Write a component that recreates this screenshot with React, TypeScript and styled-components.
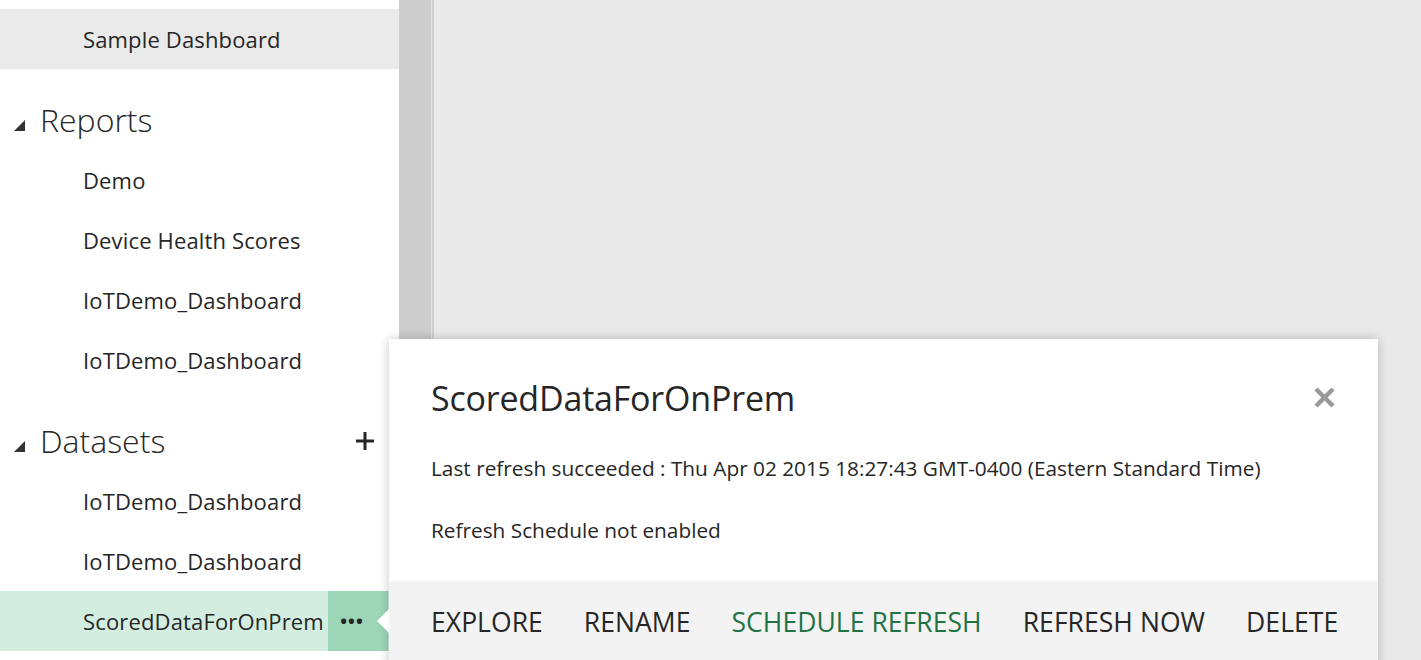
import React from 'react'
import styled, {createGlobalStyle} from 'styled-components'

const GlobalStyle = createGlobalStyle`
  html, body {
    margin: 0;
    padding: 0;
    height: 660px;
    overflow: hidden;
  }
  body {
    font-family: "Open Sans", "Noto Sans", sans-serif;
    color: #262626;
  }
`

const Page = styled.div`
  position: relative;
  display: flex;
  height: 660px;
  background: #e9e9e9;
`

const Sidebar = styled.nav`
  width: 399px;
  flex-shrink: 0;
  background: #ffffff;
  padding-top: 9px;
  box-sizing: border-box;
`

const Gutter = styled.div`
  width: 32px;
  flex-shrink: 0;
  background: #cdcdcd;
  border-right: 1px solid #e4e4e4;
  box-shadow: 1px 0 0 #cfcfcf, 2px 0 0 #cfcfcf;
`

const Item = styled.div<{$active?: boolean; $selected?: boolean}>`
  position: relative;
  display: flex;
  align-items: center;
  height: 60px;
  padding-left: 83px;
  font-size: 22px;
  letter-spacing: 0.15px;
  background: ${(p) => (p.$selected ? '#d3eee0' : p.$active ? '#eaeaea' : 'transparent')};
`

const Section = styled.div`
  display: flex;
  align-items: center;
  height: 81px;
  padding: 20px 24px 0 14px;
  box-sizing: border-box;
  font-size: 32px;
  font-weight: 300;
`

const SectionTitle = styled.span`
  flex: 1;
  margin-left: 15px;
`

const Triangle = styled.svg`
  width: 11px;
  height: 11px;
  margin-top: 12px;
  fill: #333;
`

const MoreButton = styled.div`
  position: absolute;
  top: 0;
  right: 11px;
  width: 60px;
  height: 60px;
  background: #9dd5b7;
  display: flex;
  align-items: center;
  justify-content: center;
  padding-right: 12px;
  box-sizing: border-box;
  font-size: 18px;
  font-weight: 700;
  letter-spacing: 1px;
  color: #262626;
`

const Popup = styled.div`
  position: absolute;
  left: 389px;
  top: 339px;
  width: 989px;
  height: 340px;
  background: #ffffff;
  box-shadow: 0 0 10px rgba(0, 0, 0, 0.22);
`

const Pointer = styled.div`
  position: absolute;
  left: -12px;
  top: 270px;
  width: 0;
  height: 0;
  border-top: 12px solid transparent;
  border-bottom: 12px solid transparent;
  border-right: 12px solid #ffffff;
`

const PopupHeader = styled.div`
  display: flex;
  align-items: center;
  justify-content: space-between;
  padding: 39px 42px 0 42px;
  height: 40px;
`

const PopupTitle = styled.h2`
  margin: 0;
  font-size: 34px;
  font-weight: 400;
  letter-spacing: -0.2px;
  color: #262626;
`

const CloseIcon = styled.svg`
  width: 23px;
  height: 23px;
  stroke: #999999;
  stroke-width: 4.5;
  margin-top: -2px;
`

const InfoLine = styled.p`
  margin: 0;
  padding-left: 42px;
  font-size: 20.8px;
  line-height: 62px;
`

const InfoBlock = styled.div`
  padding-top: 19px;
`

const Footer = styled.div`
  position: absolute;
  left: 0;
  right: 0;
  top: 242px;
  height: 98px;
  background: #f3f3f3;
  display: flex;
  align-items: flex-start;
  padding: 23px 0 0 42px;
  box-sizing: border-box;
  gap: 41px;
`

const Action = styled.span<{$accent?: boolean}>`
  font-size: 26.5px;
  font-weight: 400;
  letter-spacing: 0.05px;
  color: ${(p) => (p.$accent ? '#217346' : '#262626')};
`

const reports = ['Demo', 'Device Health Scores', 'IoTDemo_Dashboard', 'IoTDemo_Dashboard']
const datasets = ['IoTDemo_Dashboard', 'IoTDemo_Dashboard']

const SectionHeader = ({title, add}: {title: string; add?: boolean}) => (
  <Section>
    <Triangle viewBox="0 0 10 10">
      <polygon points="10,0 10,10 0,10" />
    </Triangle>
    <SectionTitle>{title}</SectionTitle>
    {add && (
      <svg width="20" height="20" viewBox="0 0 20 20">
        <path d="M10 1 V19 M1 10 H19" stroke="#262626" strokeWidth="3" />
      </svg>
    )}
  </Section>
)

export default function App() {
  return (
    <>
      <GlobalStyle />
      <Page>
        <Sidebar>
          <Item $active>Sample Dashboard</Item>
          <SectionHeader title="Reports" />
          {reports.map((r, i) => (
            <Item key={i}>{r}</Item>
          ))}
          <SectionHeader title="Datasets" add />
          {datasets.map((d, i) => (
            <Item key={i}>{d}</Item>
          ))}
          <Item $selected>
            ScoredDataForOnPrem
            <MoreButton>•••</MoreButton>
          </Item>
        </Sidebar>
        <Gutter />
        <Popup>
          <Pointer />
          <PopupHeader>
            <PopupTitle>ScoredDataForOnPrem</PopupTitle>
            <CloseIcon viewBox="0 0 23 23">
              <path d="M3 3 L20 20 M20 3 L3 20" />
            </CloseIcon>
          </PopupHeader>
          <InfoBlock>
            <InfoLine>Last refresh succeeded : Thu Apr 02 2015 18:27:43 GMT-0400 (Eastern Standard Time)</InfoLine>
            <InfoLine>Refresh Schedule not enabled</InfoLine>
          </InfoBlock>
          <Footer>
            <Action>EXPLORE</Action>
            <Action>RENAME</Action>
            <Action $accent>SCHEDULE REFRESH</Action>
            <Action>REFRESH NOW</Action>
            <Action>DELETE</Action>
          </Footer>
        </Popup>
      </Page>
    </>
  )
}
